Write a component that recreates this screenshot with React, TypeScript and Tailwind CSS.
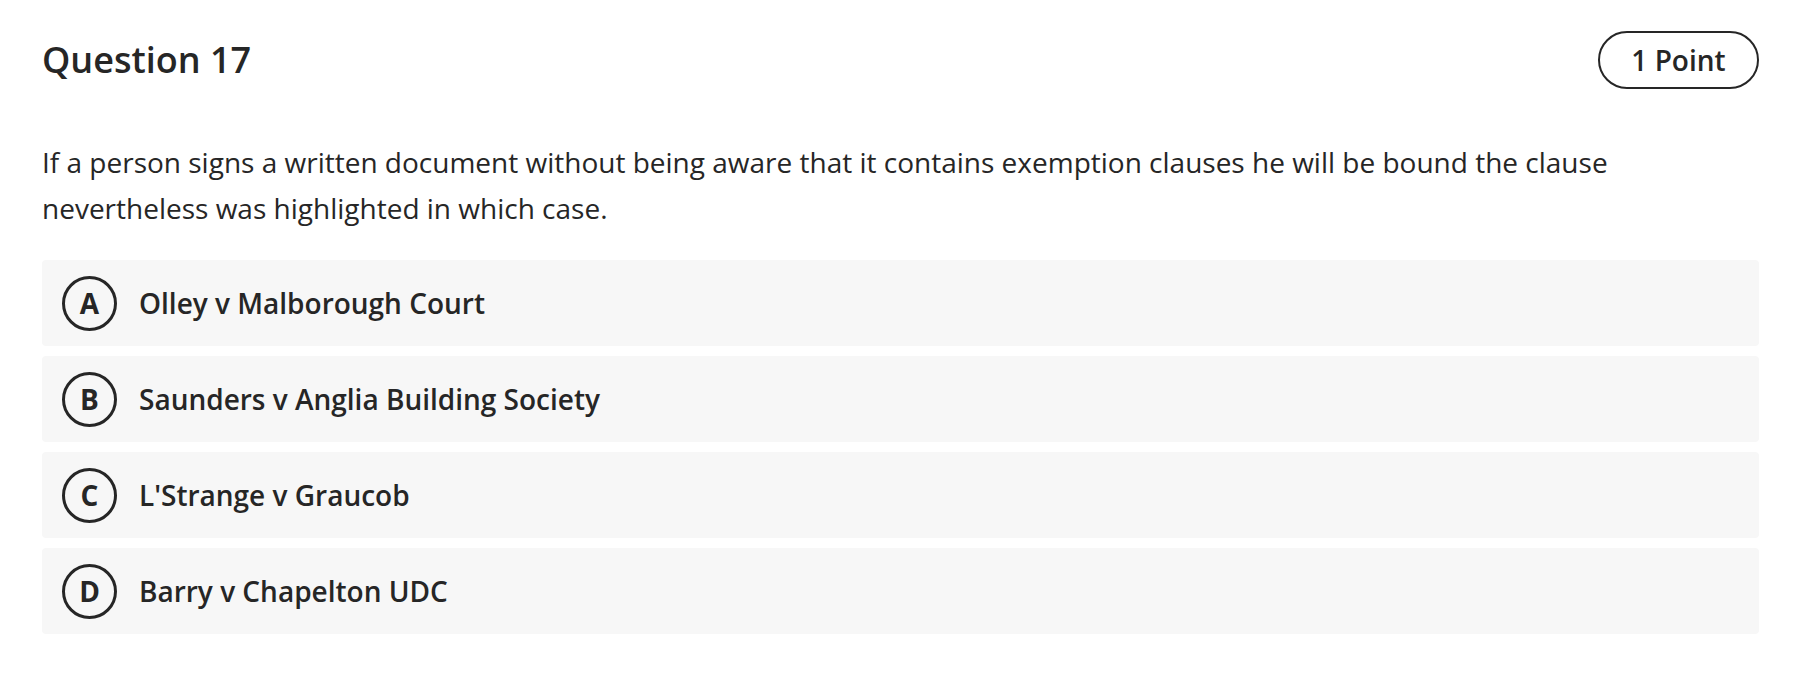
import React from "react";

const options = [
  { letter: "A", text: "Olley v Malborough Court" },
  { letter: "B", text: "Saunders v Anglia Building Society" },
  { letter: "C", text: "L'Strange v Graucob" },
  { letter: "D", text: "Barry v Chapelton UDC" },
];

export default function App() {
  return (
    <div
      className="min-h-[680px] w-full bg-white pl-[42px] pr-[37px] pt-[31px] text-[#262626]"
      style={{ fontFamily: '"Open Sans", "Noto Sans", sans-serif' }}
    >
      <div className="flex items-center justify-between">
        <h1 className="text-[36px] font-semibold leading-[48px]">Question 17</h1>
        <div className="flex h-[58px] w-[161px] items-center justify-center rounded-full border-[2.5px] border-[#262626] text-[28px] font-semibold">
          1 Point
        </div>
      </div>
      <p className="mt-[50px] text-[28px] leading-[46px]">
        If a person signs a written document without being aware that it contains exemption clauses he will be bound the clause nevertheless was highlighted in which case.
      </p>
      <div className="mt-[29px] flex flex-col gap-[10px]">
        {options.map((o) => (
          <div
            key={o.letter}
            className="flex h-[86px] items-center rounded-[4px] bg-[#f7f7f7] pl-[20px]"
          >
            <div className="flex h-[55px] w-[55px] shrink-0 items-center justify-center rounded-full border-[3.5px] border-[#262626] text-[28px] font-bold">
              {o.letter}
            </div>
            <span className="ml-[22px] text-[28px] font-semibold">{o.text}</span>
          </div>
        ))}
      </div>
    </div>
  );
}
